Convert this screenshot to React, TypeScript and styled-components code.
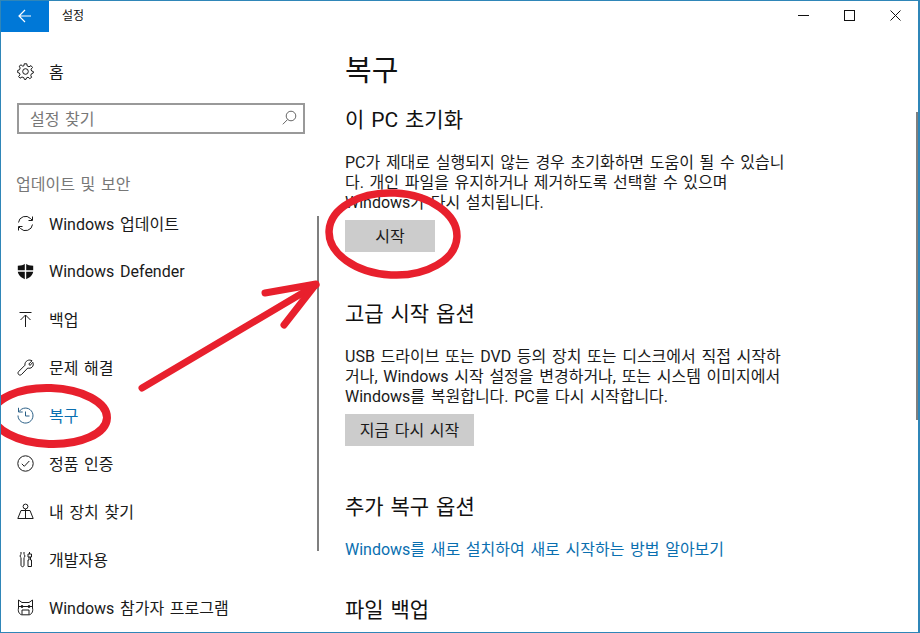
import React from "react";
import styled, { createGlobalStyle } from "styled-components";

const Global = createGlobalStyle`
  html, body {
    margin: 0;
    padding: 0;
    background: #fff;
  }
  body {
    font-family: Roboto, "Noto Sans CJK KR", sans-serif;
    color: #1a1a1a;
    word-spacing: 1.7px;
  }
`;

const Win = styled.div`
  position: relative;
  width: 920px;
  height: 633px;
  box-sizing: border-box;
  border: 1px solid #2f86b8;
  border-right-width: 2px;
  background: #fff;
  display: flex;
  flex-direction: column;
  overflow: hidden;
`;

const TitleBar = styled.div`
  height: 31px;
  display: flex;
  align-items: flex-start;
  flex-shrink: 0;
`;

const BackBtn = styled.div`
  width: 48px;
  height: 31px;
  padding-bottom: 2px;
  box-sizing: border-box;
  background: #0078d7;
  display: flex;
  align-items: center;
  justify-content: center;
`;

const TitleText = styled.div`
  margin-left: 13px;
  font-size: 12px;
  line-height: 30px;
  color: #111;
  flex: 1;
`;

const WinBtn = styled.div`
  width: 46px;
  height: 29px;
  display: flex;
  align-items: center;
  justify-content: center;
`;

const Body = styled.div`
  flex: 1;
  display: flex;
  min-height: 0;
`;

const Side = styled.div`
  width: 318px;
  flex-shrink: 0;
  position: relative;
  padding-top: 15px;
  box-sizing: border-box;
`;

const NavBar = styled.div`
  position: absolute;
  right: 0;
  top: 184px;
  width: 2px;
  height: 335px;
  background: #7f7f7f;
`;

const NavItem = styled.div<{ $active?: boolean }>`
  height: 48px;
  display: flex;
  align-items: center;
  padding-left: 16px;
  gap: 15px;
  font-size: 16px;
  color: ${(p) => (p.$active ? "#0a6fb0" : "#1a1a1a")};
  white-space: nowrap;
  svg {
    flex-shrink: 0;
  }
`;

const Search = styled.div`
  margin: 8px 0 0 16px;
  width: 288px;
  height: 31px;
  box-sizing: border-box;
  border: 2px solid #999;
  display: flex;
  align-items: center;
  justify-content: space-between;
  padding: 0 6px 2px 11px;
  font-size: 16px;
  color: #777;
`;

const GroupLabel = styled.div`
  margin: 41px 0 4px 15px;
  font-size: 16px;
  line-height: 20px;
  color: #777;
`;

const Main = styled.div`
  flex: 1;
  padding: 0 0 0 26px;
  position: relative;
  overflow: hidden;
`;

const PageTitle = styled.h1`
  margin: 19px 0 0;
  font-size: 29px;
  line-height: 40px;
  font-weight: 400;
  color: #111;
`;

const Heading = styled.h2<{ $top: number }>`
  margin: ${(p) => p.$top}px 0 0;
  font-size: 21px;
  line-height: 28px;
  font-weight: 400;
  color: #111;
`;

const Para = styled.p`
  margin: 19px 0 0;
  font-size: 16px;
  line-height: 19.8px;
  color: #1a1a1a;
  white-space: nowrap;
`;

const Btn = styled.div<{ $w: number; $top: number }>`
  margin-top: ${(p) => p.$top}px;
  width: ${(p) => p.$w}px;
  height: 32px;
  padding-bottom: 2px;
  box-sizing: border-box;
  background: #cccccc;
  display: flex;
  align-items: center;
  justify-content: center;
  font-size: 16px;
  color: #1a1a1a;
`;

const LinkText = styled.a`
  display: block;
  margin-top: 19px;
  font-size: 16px;
  line-height: 20px;
  color: #0a6fb0;
  white-space: nowrap;
`;

const PageBar = styled.div`
  position: absolute;
  right: 0;
  top: 80px;
  width: 2px;
  height: 308px;
  background: #7f7f7f;
`;

const Marks = styled.svg`
  position: absolute;
  left: -1px;
  top: -1px;
  width: 920px;
  height: 633px;
  pointer-events: none;
`;

const Ico = ({ children }: { children: React.ReactNode }) => (
  <svg width="17" height="17" viewBox="0 0 17 17" fill="none" stroke="#1a1a1a" strokeWidth="1">
    {children}
  </svg>
);

const navItems: { label: string; active?: boolean; icon: React.ReactNode }[] = [
  {
    label: "Windows 업데이트",
    icon: (
      <Ico>
        <path d="M1.5 7.5A7 7 0 0 1 13.5 3.5L15 5" />
        <path d="M15.5 1.5V5.5H11.5" />
        <path d="M15.5 9.5A7 7 0 0 1 3.5 13.5L2 12" />
        <path d="M1.5 15.5V11.5H5.5" />
      </Ico>
    ),
  },
  {
    label: "Windows Defender",
    icon: (
      <Ico>
        <path
          d="M8.5 .5C6.5 2 4 2.7 .8 2.7V8C.8 12 4.5 15 8.5 16.5C12.5 15 16.2 12 16.2 8V2.7C13 2.7 10.5 2 8.5 .5Z"
          fill="#111"
          stroke="none"
        />
        <path d="M8.5 0V17M0 8H17" stroke="#fff" strokeWidth="1.4" />
      </Ico>
    ),
  },
  {
    label: "백업",
    icon: (
      <Ico>
        <path d="M2.5 1.5H14.5M8.5 16V4M3.5 9L8.5 4L13.5 9" />
      </Ico>
    ),
  },
  {
    label: "문제 해결",
    icon: (
      <Ico>
        <path d="M10.5 1.5C12 .8 13.7 1 15 1.8L11.8 5L13 6.5L15.8 3.3C16.7 5 16.3 7 15 8.2C13.8 9.3 12.2 9.5 10.8 9L4.5 15.5C3.6 16.3 2.4 16.3 1.6 15.5C.8 14.6 .8 13.4 1.6 12.6L8 6.2C7.5 4.5 8.8 2.3 10.5 1.5Z" />
      </Ico>
    ),
  },
  {
    label: "복구",
    active: true,
    icon: (
      <Ico>
        <g stroke="#2a5f86">
          <path d="M2.2 4.5A7.5 7.5 0 1 1 1 8.5" />
          <path d="M1.5 .8V5H5.7" />
          <path d="M8.5 4.5V9H12.5" />
        </g>
      </Ico>
    ),
  },
  {
    label: "정품 인증",
    icon: (
      <Ico>
        <circle cx="8.5" cy="8.5" r="7.7" />
        <path d="M4.8 8.8L7.3 11.3L12.3 6" />
      </Ico>
    ),
  },
  {
    label: "내 장치 찾기",
    icon: (
      <Ico>
        <circle cx="8.5" cy="3.5" r="2.4" />
        <path d="M.8 15.5H16.2L13 7.5H4L.8 15.5ZM8.5 6V15.5" />
      </Ico>
    ),
  },
  {
    label: "개발자용",
    icon: (
      <Ico>
        <path d="M4 1V3.5C2.8 4 2.8 6 4 6.5V14C4 16.3 7 16.3 7 14V6.5C8.2 6 8.2 4 7 3.5V1" />
        <path d="M12.5 1V3M11 3H14.5V6H11ZM12 6V9H11V15.5H14.5V9H13.5V6" />
      </Ico>
    ),
  },
  {
    label: "Windows 참가자 프로그램",
    icon: (
      <Ico>
        <path d="M1.5 1L5 3.5H12L15.5 1V9C16.5 13 14 15.8 12 15.8H5C3 15.8 .5 13 1.5 9Z" />
        <path d="M1.5 7.5H15.5M5 11H12V15.5M5 11V15.5" />
        <circle cx="5" cy="7.5" r="1" fill="#1a1a1a" />
        <circle cx="12" cy="7.5" r="1" fill="#1a1a1a" />
      </Ico>
    ),
  },
];

export default function App() {
  return (
    <>
      <Global />
      <Win>
        <TitleBar>
          <BackBtn>
            <svg width="14" height="14" viewBox="0 0 14 14" fill="none" stroke="#fff" strokeWidth="1.2">
              <path d="M13 7H1.2M7 1L1 7L7 13" />
            </svg>
          </BackBtn>
          <TitleText>설정</TitleText>
          <WinBtn>
            <svg width="11" height="11" viewBox="0 0 11 11" stroke="#111" fill="none">
              <path d="M0 5.5H11" />
            </svg>
          </WinBtn>
          <WinBtn>
            <svg width="11" height="11" viewBox="0 0 11 11" stroke="#111" fill="none">
              <rect x=".5" y=".5" width="10" height="10" />
            </svg>
          </WinBtn>
          <WinBtn>
            <svg width="11" height="11" viewBox="0 0 11 11" stroke="#111" fill="none">
              <path d="M.5 .5L10.5 10.5M10.5 .5L.5 10.5" />
            </svg>
          </WinBtn>
        </TitleBar>
        <Body>
          <Side>
            <NavItem>
              <svg width="17" height="17" viewBox="0 0 17 17" fill="none" stroke="#1a1a1a">
                <circle cx="8.5" cy="8.5" r="2.8" />
                <path d="M7.2 .8H9.8L10.2 3L12 3.8L14 2.6L15.5 4.5L14 6.2L14.6 8L16.3 8.5V10L14.4 10.8L13.8 12.4L14.6 14.4L12.8 15.6L11 14.2L9.6 14.8L9 16.4H7.4L6.8 14.6L5 14L3 15.2L1.6 13.6L3 11.8L2.4 10L.7 9.6V7.4L2.5 6.8L3.2 5L2.2 3.2L4 1.8L5.8 3.2L7 2.7Z" />
              </svg>
              홈
            </NavItem>
            <Search>
              설정 찾기
              <svg width="15" height="15" viewBox="0 0 15 15" fill="none" stroke="#666">
                <circle cx="9" cy="6" r="4.8" />
                <path d="M5.6 9.5L.8 14.3" />
              </svg>
            </Search>
            <GroupLabel>업데이트 및 보안</GroupLabel>
            {navItems.map((it) => (
              <NavItem key={it.label} $active={it.active}>
                {it.icon}
                {it.label}
              </NavItem>
            ))}
            <NavBar />
          </Side>
          <Main>
            <PageTitle>복구</PageTitle>
            <Heading $top={15}>이 PC 초기화</Heading>
            <Para>
              PC가 제대로 실행되지 않는 경우 초기화하면 도움이 될 수 있습니
              <br />
              다. 개인 파일을 유지하거나 제거하도록 선택할 수 있으며
              <br />
              Windows가 다시 설치됩니다.
            </Para>
            <Btn $w={90} $top={8}>시작</Btn>
            <Heading $top={48}>고급 시작 옵션</Heading>
            <Para>
              USB 드라이브 또는 DVD 등의 장치 또는 디스크에서 직접 시작하
              <br />
              거나, Windows 시작 설정을 변경하거나, 또는 시스템 이미지에서
              <br />
              Windows를 복원합니다. PC를 다시 시작합니다.
            </Para>
            <Btn $w={129} $top={7}>지금 다시 시작</Btn>
            <Heading $top={47}>추가 복구 옵션</Heading>
            <LinkText>Windows를 새로 설치하여 새로 시작하는 방법 알아보기</LinkText>
            <Heading $top={36}>파일 백업</Heading>
            <PageBar />
          </Main>
        </Body>
        <Marks viewBox="0 0 920 633" fill="none" stroke="#e8202d" strokeLinecap="round" strokeLinejoin="round">
          <ellipse cx="50" cy="416" rx="57" ry="28" strokeWidth="8" transform="rotate(2 50 416)" />
          <ellipse cx="393" cy="234" rx="64" ry="41" strokeWidth="7.5" transform="rotate(3 393 234)" />
          <path d="M142 388L316 285" strokeWidth="7" />
          <path d="M265 293L316 284L284 325" strokeWidth="7" />
        </Marks>
      </Win>
    </>
  );
}
